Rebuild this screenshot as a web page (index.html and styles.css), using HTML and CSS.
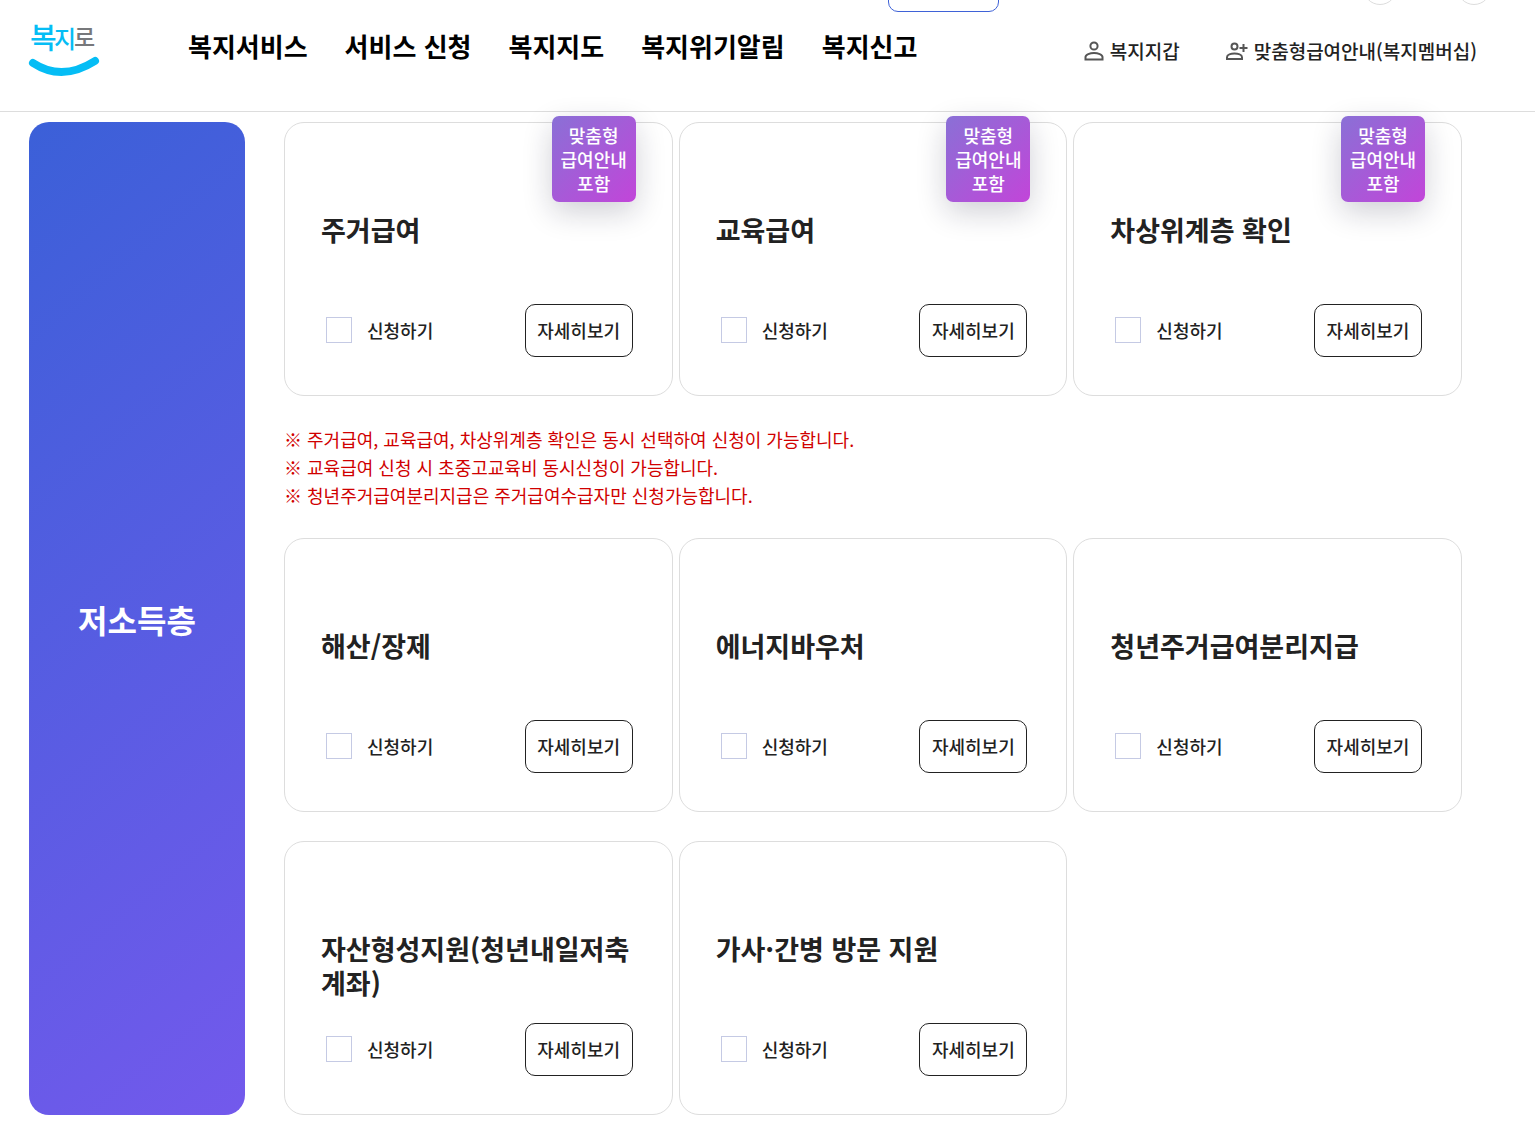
FILE: index.html
```html
<!DOCTYPE html>
<html lang="ko">
<head>
<meta charset="utf-8">
<meta name="viewport" content="width=device-width, initial-scale=1">
<title>복지로 - 서비스 신청</title>
<link rel="stylesheet" href="styles.css">
</head>
<body>
<header class="header">
  <div class="header-tools">
    <button class="tool-pill" type="button" aria-label="언어"></button>
    <div class="zoom-tools">
      <button class="tool-round" type="button" aria-label="축소"></button>
      <button class="tool-round" type="button" aria-label="확대"></button>
    </div>
  </div>
  <div class="header-main">
    <a class="logo" href="#">
      <svg width="72" height="62" viewBox="0 0 72 62" role="img" aria-label="복지로">
        <text class="logo-text" x="2" y="34" font-size="29">복</text>
        <text class="logo-text" x="26" y="33" font-size="24">지</text>
        <text class="logo-text logo-gray" x="46" y="31" font-size="23">로</text>
        <path d="M5 48Q34 67 67 46" fill="none" stroke="#05bdf5" stroke-width="8" stroke-linecap="round"/>
      </svg>
    </a>
    <nav class="nav">
      <a href="#">복지서비스</a>
      <a href="#">서비스 신청</a>
      <a href="#">복지지도</a>
      <a href="#">복지위기알림</a>
      <a href="#">복지신고</a>
    </nav>
    <div class="links">
      <a href="#">
        <svg width="20" height="20" viewBox="0 0 20 20" fill="none" stroke="#555" stroke-width="2" aria-hidden="true">
          <circle cx="10" cy="5" r="3.6"/>
          <path d="M1.500 18.500v-2.400c0-2.600 4.500-4 8.500-4s8.500 1.400 8.500 4v2.400z"/>
        </svg>
        복지지갑
      </a>
      <a href="#">
        <svg width="22" height="20" viewBox="0 0 22 20" fill="none" stroke="#555" stroke-width="2" aria-hidden="true">
          <circle cx="8.500" cy="5.500" r="3"/>
          <path d="M1 18v-1.800c0-2.400 4-3.600 7.500-3.600s7.500 1.200 7.500 3.600v1.800zM17.500 3v8M13.500 7h8"/>
        </svg>
        맞춤형급여안내(복지멤버십)
      </a>
    </div>
  </div>
</header>

<main class="content">
  <h2 class="category">저소득층</h2>
  <div class="services">
    <ul class="cards">
      <li class="card">
        <span class="badge">맞춤형<br>급여안내<br>포함</span>
        <h3>주거급여</h3>
        <div class="card-foot"><label><input type="checkbox">신청하기</label><button type="button">자세히보기</button></div>
      </li>
      <li class="card">
        <span class="badge">맞춤형<br>급여안내<br>포함</span>
        <h3>교육급여</h3>
        <div class="card-foot"><label><input type="checkbox">신청하기</label><button type="button">자세히보기</button></div>
      </li>
      <li class="card">
        <span class="badge">맞춤형<br>급여안내<br>포함</span>
        <h3>차상위계층 확인</h3>
        <div class="card-foot"><label><input type="checkbox">신청하기</label><button type="button">자세히보기</button></div>
      </li>
    </ul>
    <div class="notes">
      <p>※ 주거급여, 교육급여, 차상위계층 확인은 동시 선택하여 신청이 가능합니다.</p>
      <p>※ 교육급여 신청 시 초중고교육비 동시신청이 가능합니다.</p>
      <p>※ 청년주거급여분리지급은 주거급여수급자만 신청가능합니다.</p>
    </div>
    <ul class="cards">
      <li class="card">
        <h3>해산/장제</h3>
        <div class="card-foot"><label><input type="checkbox">신청하기</label><button type="button">자세히보기</button></div>
      </li>
      <li class="card">
        <h3>에너지바우처</h3>
        <div class="card-foot"><label><input type="checkbox">신청하기</label><button type="button">자세히보기</button></div>
      </li>
      <li class="card">
        <h3>청년주거급여분리지급</h3>
        <div class="card-foot"><label><input type="checkbox">신청하기</label><button type="button">자세히보기</button></div>
      </li>
      <li class="card">
        <h3>자산형성지원(청년내일저축계좌)</h3>
        <div class="card-foot"><label><input type="checkbox">신청하기</label><button type="button">자세히보기</button></div>
      </li>
      <li class="card">
        <h3>가사·간병 방문 지원</h3>
        <div class="card-foot"><label><input type="checkbox">신청하기</label><button type="button">자세히보기</button></div>
      </li>
    </ul>
  </div>
</main>
</body>
</html>
```
FILE: styles.css
```css
* { box-sizing: border-box; }

body {
  margin: 0;
  background: #fff;
  color: #222;
  font-family: "Noto Sans CJK KR", "Noto Sans", sans-serif;
  font-size: 18px;
  font-weight: 500;
}

a { color: inherit; text-decoration: none; }
button, input { font: inherit; color: inherit; margin: 0; }
h2, h3, p, ul { margin: 0; padding: 0; }
ul { list-style: none; }

/* Header */
.header { border-bottom: 1px solid #ddd; }

.header-tools {
  display: flex;
  justify-content: flex-end;
  align-items: flex-end;
  gap: 364px;
  height: 12px;
  padding-right: 44px;
  overflow: hidden;
}
.tool-pill {
  width: 111px;
  height: 40px;
  border: 1px solid #3f62d7;
  border-radius: 10px;
  background: #fff;
}
.zoom-tools { display: flex; gap: 60px; padding-bottom: 7px; }
.tool-round {
  width: 34px;
  height: 34px;
  border: 1px solid #ddd;
  border-radius: 50%;
  background: #fff;
}

.header-main {
  display: flex;
  align-items: flex-start;
  padding: 3px 58px 34px 28px;
}
.logo svg { display: block; overflow: visible; }
.logo-text { fill: #05bdf5; font-weight: 500; }
.logo-gray { fill: #77787b; }
.nav {
  display: flex;
  gap: 37px;
  margin-left: 88px;
  padding-top: 13px;
  color: #000;
  font-size: 26px;
  font-weight: 700;
  line-height: 36px;
}
.links {
  display: flex;
  gap: 46px;
  margin-left: auto;
  padding-top: 22px;
  font-size: 19px;
  line-height: 28px;
}
.links a { display: flex; align-items: center; gap: 6px; }

/* Category and its services */
.content {
  display: flex;
  gap: 39px;
  padding: 10px 73px 20px 29px;
}
.category {
  display: flex;
  flex: 0 0 216px;
  align-items: center;
  justify-content: center;
  border-radius: 20px;
  background: linear-gradient(140deg, #3b60d8, #7359ec);
  color: #fff;
  font-size: 32px;
  font-weight: 700;
}
.services { flex: 1; min-width: 0; }

.cards {
  display: grid;
  grid-template-columns: repeat(3, 1fr);
  gap: 29px 6px;
}
.card {
  position: relative;
  display: flex;
  flex-direction: column;
  justify-content: space-between;
  min-height: 274px;
  padding: 90px 39px 38px 36px;
  border: 1px solid #ddd;
  border-radius: 20px;
}
.card h3 {
  font-size: 27px;
  font-weight: 700;
  line-height: 34px;
  word-break: break-all;
}
.badge {
  position: absolute;
  top: -7px;
  right: 36px;
  width: 84px;
  padding: 7px 0;
  border-radius: 7px;
  background: linear-gradient(135deg, #8a70d6, #c245d9);
  box-shadow: 0 10px 30px rgba(20, 20, 50, 0.2);
  color: #fff;
  line-height: 24px;
  text-align: center;
}
.card-foot {
  display: flex;
  align-items: center;
  justify-content: space-between;
  padding-left: 5px;
}
.card-foot label {
  display: flex;
  align-items: center;
  gap: 15px;
  padding-bottom: 2px;
}
.card-foot input {
  appearance: none;
  width: 26px;
  height: 26px;
  border: 1px solid #c5cae4;
  background: #fff;
}
.card-foot input:checked { background: #3f62d7; }
.card-foot button {
  width: 108px;
  height: 53px;
  padding: 0 0 2px;
  border: 1px solid #222;
  border-radius: 10px;
  background: #fff;
}

.notes {
  padding: 29px 0;
  color: #d00000;
  font-weight: 400;
  line-height: 28px;
}
```
